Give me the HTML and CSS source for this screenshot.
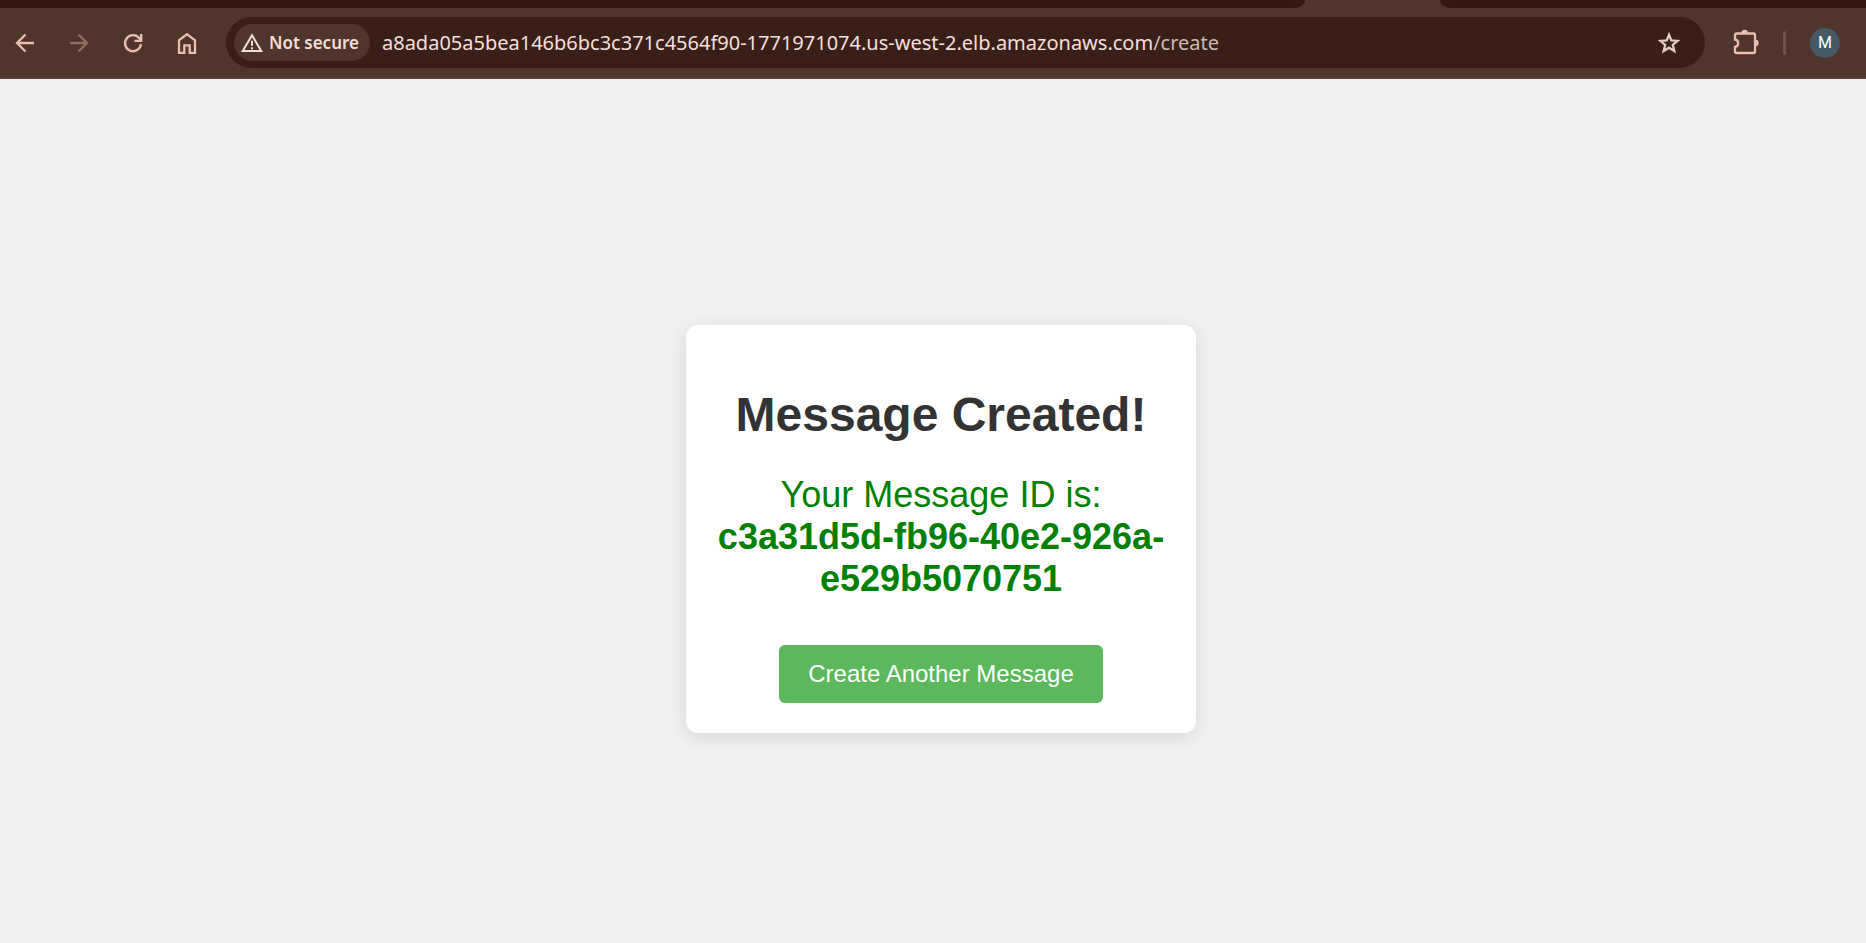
FILE: index.html
```
<!DOCTYPE html>
<html lang="en">
<head>
<meta charset="utf-8">
<title>Message Created!</title>
<link rel="stylesheet" href="styles.css">
</head>
<body>
<header class="browser">
  <div class="tabstrip">
    <div class="tabs-before"></div>
    <div class="tab-active"></div>
    <div class="tabs-after"></div>
  </div>
  <nav class="toolbar" aria-label="Browser toolbar">
    <div class="nav-buttons">
      <button class="icon-button" type="button" aria-label="Back">
        <svg viewBox="0 0 24 24"><path d="M21 12H4M12.500 3.500 4 12l8.500 8.500"/></svg>
      </button>
      <button class="icon-button disabled" type="button" aria-label="Forward" disabled>
        <svg viewBox="0 0 24 24"><path d="M3 12h17M11.500 3.500 20 12l-8.500 8.500"/></svg>
      </button>
      <button class="icon-button" type="button" aria-label="Reload">
        <svg viewBox="0 0 24 24"><path d="M20 13.200A8 8 0 1 1 18.300 7.200L20 9.200M20.200 3v6.800h-6.700"/></svg>
      </button>
      <button class="icon-button" type="button" aria-label="Home">
        <svg viewBox="0 0 24 24"><path d="M4 21.800V9.300l8-6.100 8 6.100v12.500h-5.300v-7.500H9.300v7.500z"/></svg>
      </button>
    </div>
    <div class="omnibox">
      <button class="security" type="button">
        <svg viewBox="0 0 24 24"><path d="M12 4.300 2.700 20h18.600z"/><path d="M12 9.700v5M12 16.200v2"/></svg>
        <span>Not secure</span>
      </button>
      <div class="url" role="textbox" aria-label="Address" contenteditable="true" spellcheck="false">a8ada05a5bea146b6bc3c371c4564f90-1771971074.us-west-2.elb.amazonaws.com<span class="path">/create</span></div>
      <button class="icon-button star" type="button" aria-label="Bookmark this page">
        <svg viewBox="0 0 24 24"><path d="m12 3.700 2.300 5.700 6.200.5-4.700 4 1.500 6.100-5.300-3.300L6.700 20l1.500-6.100-4.700-4 6.200-.5z"/></svg>
      </button>
    </div>
    <div class="tools">
      <button class="icon-button puzzle" type="button" aria-label="Extensions">
        <svg viewBox="0 0 28 28"><path d="M5.500 4.500h17A1.500 1.500 0 0 1 24 6v16.500a1.500 1.500 0 0 1-1.500 1.500h-17A1.500 1.500 0 0 1 4 22.500V18a3.800 3.800 0 0 0 0-7.500V6a1.500 1.500 0 0 1 1.500-1.500z"/><path class="solid" d="M10.500 4a3.200 3.200 0 0 1 6.400 0zM24.500 10.800a3.200 3.200 0 0 1 0 6.400z"/></svg>
      </button>
      <span class="divider"></span>
      <button class="avatar" type="button" aria-label="Profile M">M</button>
    </div>
  </nav>
</header>
<main class="page">
  <section class="card">
    <h1>Message Created!</h1>
    <p>Your Message ID is: <strong>c3a31d5d-fb96-40e2-926a-e529b5070751</strong></p>
    <a class="button" href="#create">Create Another Message</a>
  </section>
</main>
</body>
</html>
```
FILE: styles.css
```
* {
  box-sizing: border-box;
}

body {
  margin: 0;
  min-height: 100vh;
  display: flex;
  flex-direction: column;
  background: #f0f0f0;
  font-family: "Liberation Sans", Arial, sans-serif;
}

button {
  border: 0;
  padding: 0;
  background: none;
  font: inherit;
  color: inherit;
}

.browser {
  background: #50352c;
  color: #e9bfb2;
  border-bottom: 2px solid #5a3f36;
  font-family: "Noto Sans", "Open Sans", sans-serif;
}

.tabstrip {
  display: flex;
  height: 8px;
}

.tabs-before,
.tabs-after {
  background: #331811;
}

.tabs-before {
  flex: 1305;
  border-bottom-right-radius: 11px 8px;
}

.tab-active {
  flex: 135;
}

.tabs-after {
  flex: 426;
  border-bottom-left-radius: 11px 8px;
}

.toolbar {
  display: flex;
  align-items: center;
  padding: 9px 26px 9px 13px;
}

.nav-buttons {
  display: flex;
  gap: 30px;
}

.icon-button {
  display: flex;
}

.icon-button svg {
  width: 24px;
  height: 24px;
  fill: none;
  stroke: currentColor;
  stroke-width: 2.3;
}

.disabled {
  color: #8f6e65;
}

.omnibox {
  flex: 1;
  display: flex;
  align-items: center;
  height: 51px;
  margin-left: 27px;
  padding: 0 24px 0 8px;
  border-radius: 26px;
  background: #3a1f18;
}

.security {
  display: flex;
  align-items: center;
  gap: 5px;
  height: 37px;
  padding: 0 11px 0 6px;
  border-radius: 19px;
  background: #50352c;
  color: #f3ddd6;
  font-size: 17px;
  font-weight: 600;
}

.security svg {
  width: 24px;
  height: 24px;
  fill: none;
  stroke: currentColor;
  stroke-width: 2;
}

.url {
  flex: 1;
  margin-left: 12px;
  color: #f6dfd8;
  font-size: 20px;
  line-height: 28px;
  white-space: nowrap;
  outline: 0;
}

.path {
  color: #cdb8b0;
}

.star {
  color: #e2cbc4;
}

.tools {
  display: flex;
  align-items: center;
  margin-left: 26px;
}

.puzzle svg {
  width: 28px;
  height: 28px;
}

.puzzle .solid {
  fill: currentColor;
  stroke: none;
}

.divider {
  width: 3px;
  height: 24px;
  margin: 0 24px;
  border-radius: 2px;
  background: #70514a;
}

.avatar {
  width: 30px;
  height: 30px;
  border-radius: 50%;
  background: #455a64;
  color: #fff;
  font-family: Roboto, sans-serif;
  font-size: 16px;
}

.page {
  flex: 1;
  display: flex;
  align-items: center;
  justify-content: center;
  padding: 36px 0 0 16px;
}

.card {
  width: 510px;
  padding: 30px;
  border-radius: 12px;
  background: #fff;
  box-shadow: 0 4px 18px rgba(0, 0, 0, 0.1);
  text-align: center;
}

h1 {
  margin: 32px 0;
  color: #333;
  font-size: 48px;
  line-height: 55px;
}

p {
  margin: 0 0 45px;
  color: #008000;
  font-size: 36px;
  line-height: 42px;
}

.button {
  display: inline-block;
  padding: 15px 29px;
  border-radius: 6px;
  background: #5cb85c;
  color: #fff;
  font-size: 24px;
  line-height: 28px;
  text-decoration: none;
  vertical-align: top;
}
```
